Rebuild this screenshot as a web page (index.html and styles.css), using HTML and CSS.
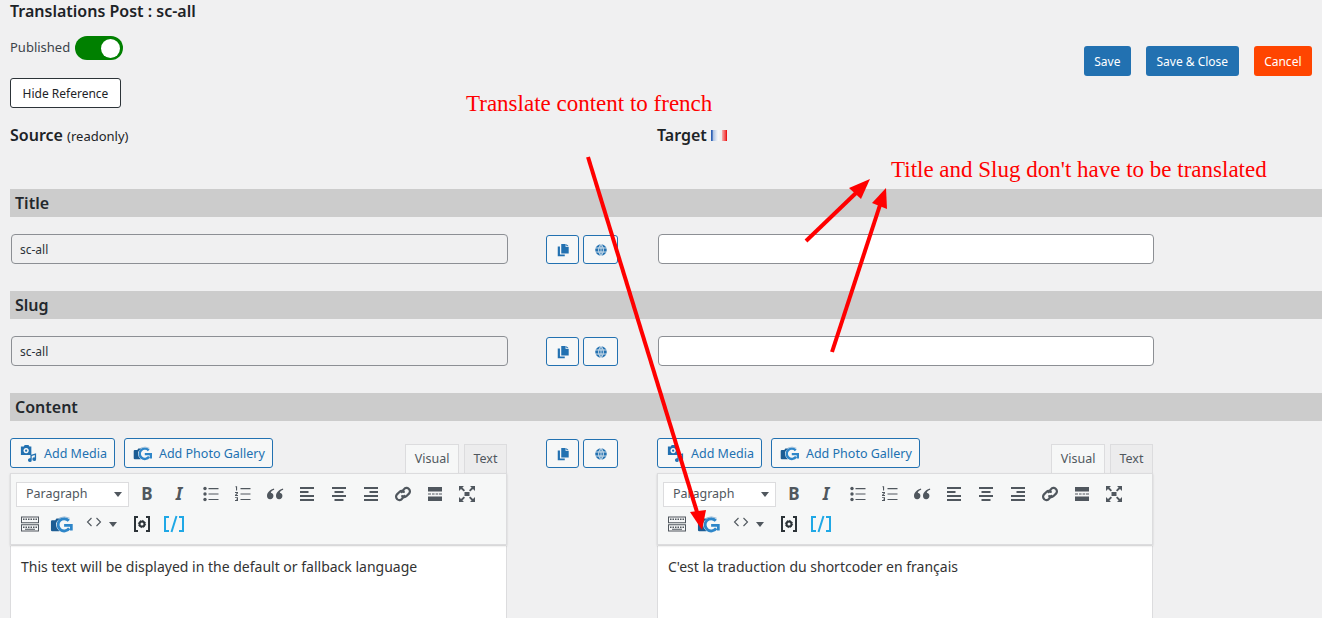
FILE: index.html
```html
<!DOCTYPE html>
<html lang="en">
<head>
<meta charset="utf-8">
<title>Translations Post</title>
<link rel="stylesheet" href="styles.css">
</head>
<body>
<svg class="defs" width="0" height="0" aria-hidden="true">
  <defs>
    <symbol id="i-copy" viewBox="0 0 16 16"><path d="M6 1h5v3.5h3.5V12H6z" /><path d="M11.8 1l2.7 2.8h-2.7z"/><path d="M4.5 4H2v11h8v-1.8H4.5z"/></symbol>
    <symbol id="i-globe" viewBox="0 0 16 16"><circle cx="8" cy="8" r="6.6"/><path d="M1.4 5.7h13.2M1.4 10.3h13.2M8 1.4v13.2M8 1.4C4.4 5 4.4 11 8 14.6M8 1.4c3.6 3.6 3.6 9.6 0 13.2" fill="none" stroke="#f6f7f7" stroke-width=".9"/></symbol>
    <symbol id="i-media" viewBox="0 0 20 20"><path fill-rule="evenodd" d="M2 2.5h3l1-1.5h4l1 1.5h2v9H2zM7.5 4.2a2.8 2.8 0 1 0 .01 0z"/><path d="M12 11.5l6-1.7v6.2a2 2 0 1 1-1.4-1.9v-2.5L13.4 12.6v4.4a2 2 0 1 1-1.4-1.9z"/><circle cx="7.5" cy="7" r="1.2"/></symbol>
    <symbol id="i-gallery" viewBox="0 0 28 20">
      <path fill="#1c5c93" d="M1 6.5Q1 5 2.5 5H6l1.5-2h4.5Q6.5 6 7 11q.3 4 4 7H2.5Q1 18 1 16.5z"/>
      <path fill="none" stroke="#2e86c9" stroke-width="3.4" d="M22 5.6A7.2 7.2 0 1 0 22.5 14.5"/>
      <path fill="none" stroke="#2e86c9" stroke-width="3.2" d="M16.5 11H25v6"/>
      <path fill="none" stroke="#8fb4d3" stroke-width="1" d="M11 2.2Q17 -.4 23 2.6"/>
    </symbol>
    <symbol id="i-ul" viewBox="0 0 20 20"><circle cx="4" cy="4.5" r="1.7"/><circle cx="4" cy="10" r="1.7"/><circle cx="4" cy="15.5" r="1.7"/><path d="M7.5 4h10v1.2h-10zM7.5 9.4h10v1.2h-10zM7.5 14.9h10v1.2h-10z"/></symbol>
    <symbol id="i-ol" viewBox="0 0 20 20"><path d="M7.5 4h10v1.2h-10zM7.5 9.4h10v1.2h-10zM7.5 14.9h10v1.2h-10z"/><path d="M2.5 2.2h1.6v4.4H3V3.2h-.5zM2 8h3v1.3L3.4 11H5v.9H2v-.8l1.9-2.2H2zM2 13.2h3v3.8H2v-.9h2v-.6H3v-.8h1v-.6H2z"/></symbol>
    <symbol id="i-quote" viewBox="0 0 20 20"><path d="M9 4.5C5.5 5.5 2 8 2 12a3.2 3.2 0 1 0 3.8-3.2C6 7.4 7.4 6.4 9.2 5.7zM18 4.5C14.5 5.5 11 8 11 12a3.2 3.2 0 1 0 3.8-3.2c.2-1.4 1.6-2.4 3.4-3.1z"/></symbol>
    <symbol id="i-al" viewBox="0 0 20 20"><path d="M3 3h14v2H3zM3 7h8.5v2H3zM3 11h14v2H3zM3 15h14v2H3z"/></symbol>
    <symbol id="i-ac" viewBox="0 0 20 20"><path d="M3 3h14v2H3zM5.5 7h9v2h-9zM3 11h14v2H3zM5.5 15h9v2h-9z"/></symbol>
    <symbol id="i-ar" viewBox="0 0 20 20"><path d="M3 3h14v2H3zM8.5 7H17v2H8.5zM3 11h14v2H3zM3 15h14v2H3z"/></symbol>
    <symbol id="i-link" viewBox="0 0 20 20"><g fill="none" stroke-width="2.2" stroke-linecap="round"><path d="M8.5 8.2 11 5.2a3.2 3.2 0 0 1 4.7-.4l.1.1a3.2 3.2 0 0 1 .2 4.7l-2.4 2.4a3.2 3.2 0 0 1-4.4.1"/><path d="M11.5 11.8 9 14.8a3.2 3.2 0 0 1-4.7.4l-.1-.1A3.2 3.2 0 0 1 4 10.4l2.4-2.4a3.2 3.2 0 0 1 4.4-.1"/></g></symbol>
    <symbol id="i-more" viewBox="0 0 20 20"><path d="M3 3h14v4.5H3zM3 12.5h14V17H3zM3 9.4h3v1.2H3zM7 9.4h2.6v1.2H7zM10.6 9.4h2.6v1.2h-2.6zM14 9.4h3v1.2h-3z"/></symbol>
    <symbol id="i-full" viewBox="0 0 20 20"><path d="M2 2h5L5.4 3.6 8 6.2 6.8 7.6 4 5 2 7zM18 2v5l-2-2-2.8 2.6L12 6.2l2.6-2.6L13 2zM2 18v-5l2 2 2.8-2.6L8 13.8l-2.6 2.6L7 18zM18 18h-5l1.6-1.6-2.6-2.6 1.2-1.4L16 15l2-2z"/><path d="M7.5 8h5v4h-5z"/></symbol>
    <symbol id="i-kbd" viewBox="0 0 20 16"><path fill-rule="evenodd" d="M1 .5h18v6.7H1zM2 1.5v4.7h16V1.500z"/><path fill-rule="evenodd" d="M1 8.300h18V15.500H1zM2 9.300v5.200h16V9.300z"/><path d="M3 2.500h1.500V4H3zM5.500 2.500H7V4H5.500zM8 2.500h1.500V4H8zM10.500 2.500H12V4h-1.500zM13 2.500h1.500V4H13zM15.500 2.500H17V4h-1.500zM3 10.500h1.500V12H3zM5.500 10.500H7V12H5.500zM8 10.500h1.500V12H8zM10.500 10.500H12V12h-1.500zM13 10.500h1.500V12H13zM15.500 10.500H17V12h-1.500zM5 12.800h10v1H5z"/></symbol>
    <symbol id="i-code" viewBox="0 0 16 10"><path fill="none" stroke-width="1.100" d="M5.500 1 1.500 5l4 4M10.500 1l4 4-4 4"/></symbol>
    <symbol id="i-sc" viewBox="0 0 18 18"><path fill="none" stroke="#2c3338" stroke-width="2" d="M5 2H2v14h3M13 2h3v14h-3"/><circle cx="9" cy="9" r="2.500" fill="none" stroke="#2c3338" stroke-width="2"/><circle cx="9" cy="9" r="3.600" fill="none" stroke="#2c3338" stroke-width="1" stroke-dasharray="1.300 1.500"/></symbol>
    <symbol id="i-slash" viewBox="0 0 22 18"><path fill="none" stroke="#1fa8e6" stroke-width="2" d="M6 2H2v14h4M16 2h4v14h-4M13.500 1 8.500 17"/></symbol>
  </defs>
</svg>

<main class="page">
  <header class="top">
    <div class="top-main">
      <h1 class="page-title">Translations Post : sc-all</h1>
      <div class="status">
        <span class="status-label">Published</span>
        <span class="toggle"><span class="toggle-knob"></span></span>
      </div>
      <button class="btn-outline">Hide Reference</button>
    </div>
    <div class="actions">
      <button class="btn-solid">Save</button>
      <button class="btn-solid">Save &amp; Close</button>
      <button class="btn-solid btn-cancel">Cancel</button>
    </div>
  </header>

  <div class="columns heads">
    <h2 class="col-head">Source <small class="col-note">(readonly)</small></h2>
    <span></span>
    <h2 class="col-head">Target <span class="flag"></span></h2>
  </div>

  <section class="field">
    <h3 class="bar">Title</h3>
    <div class="columns row">
      <input class="text-input readonly" value="sc-all" readonly>
      <div class="tools">
        <button class="tool"><svg class="ti"><use href="#i-copy"/></svg></button>
        <button class="tool tool-w"><svg class="ti"><use href="#i-globe"/></svg></button>
      </div>
      <input class="text-input target">
    </div>
  </section>

  <section class="field">
    <h3 class="bar">Slug</h3>
    <div class="columns row">
      <input class="text-input readonly" value="sc-all" readonly>
      <div class="tools">
        <button class="tool"><svg class="ti"><use href="#i-copy"/></svg></button>
        <button class="tool tool-w"><svg class="ti"><use href="#i-globe"/></svg></button>
      </div>
      <input class="text-input target">
    </div>
  </section>

  <section class="field">
    <h3 class="bar">Content</h3>
    <div class="columns row">
      <div class="editor">
        <div class="editor-head">
          <div class="media-btns">
            <button class="media"><svg class="mi"><use href="#i-media"/></svg>Add Media</button>
            <button class="media"><svg class="gi"><use href="#i-gallery"/></svg>Add Photo Gallery</button>
          </div>
          <div class="tabs"><span class="tab tab-on">Visual</span><span class="tab">Text</span></div>
        </div>
        <div class="toolbar">
          <div class="tb-row tb-first">
            <span class="select">Paragraph<i class="caret"></i></span>
            <span class="tb tb-b">B</span>
            <span class="tb tb-i">I</span>
            <span class="tb"><svg class="ic"><use href="#i-ul"/></svg></span>
            <span class="tb"><svg class="ic"><use href="#i-ol"/></svg></span>
            <span class="tb"><svg class="ic"><use href="#i-quote"/></svg></span>
            <span class="tb"><svg class="ic"><use href="#i-al"/></svg></span>
            <span class="tb"><svg class="ic"><use href="#i-ac"/></svg></span>
            <span class="tb"><svg class="ic"><use href="#i-ar"/></svg></span>
            <span class="tb"><svg class="ic"><use href="#i-link"/></svg></span>
            <span class="tb"><svg class="ic"><use href="#i-more"/></svg></span>
            <span class="tb"><svg class="ic"><use href="#i-full"/></svg></span>
          </div>
          <div class="tb-row tb-second">
            <span class="tb"><svg class="ic-kbd"><use href="#i-kbd"/></svg></span>
            <span class="tb"><svg class="gi-tb"><use href="#i-gallery"/></svg></span>
            <span class="tb tb-code"><svg class="ic-code"><use href="#i-code"/></svg><i class="caret"></i></span>
            <span class="tb"><svg class="ic-sc"><use href="#i-sc"/></svg></span>
            <span class="tb"><svg class="ic-slash"><use href="#i-slash"/></svg></span>
          </div>
        </div>
        <div class="editor-body">This text will be displayed in the default or fallback language</div>
      </div>
      <div class="tools tools-content">
        <button class="tool"><svg class="ti"><use href="#i-copy"/></svg></button>
        <button class="tool tool-w"><svg class="ti"><use href="#i-globe"/></svg></button>
      </div>
      <div class="editor editor-target">
        <div class="editor-head">
          <div class="media-btns">
            <button class="media"><svg class="mi"><use href="#i-media"/></svg>Add Media</button>
            <button class="media"><svg class="gi"><use href="#i-gallery"/></svg>Add Photo Gallery</button>
          </div>
          <div class="tabs"><span class="tab tab-on">Visual</span><span class="tab">Text</span></div>
        </div>
        <div class="toolbar">
          <div class="tb-row tb-first">
            <span class="select">Paragraph<i class="caret"></i></span>
            <span class="tb tb-b">B</span>
            <span class="tb tb-i">I</span>
            <span class="tb"><svg class="ic"><use href="#i-ul"/></svg></span>
            <span class="tb"><svg class="ic"><use href="#i-ol"/></svg></span>
            <span class="tb"><svg class="ic"><use href="#i-quote"/></svg></span>
            <span class="tb"><svg class="ic"><use href="#i-al"/></svg></span>
            <span class="tb"><svg class="ic"><use href="#i-ac"/></svg></span>
            <span class="tb"><svg class="ic"><use href="#i-ar"/></svg></span>
            <span class="tb"><svg class="ic"><use href="#i-link"/></svg></span>
            <span class="tb"><svg class="ic"><use href="#i-more"/></svg></span>
            <span class="tb"><svg class="ic"><use href="#i-full"/></svg></span>
          </div>
          <div class="tb-row tb-second">
            <span class="tb"><svg class="ic-kbd"><use href="#i-kbd"/></svg></span>
            <span class="tb"><svg class="gi-tb"><use href="#i-gallery"/></svg></span>
            <span class="tb tb-code"><svg class="ic-code"><use href="#i-code"/></svg><i class="caret"></i></span>
            <span class="tb"><svg class="ic-sc"><use href="#i-sc"/></svg></span>
            <span class="tb"><svg class="ic-slash"><use href="#i-slash"/></svg></span>
          </div>
        </div>
        <div class="editor-body">C'est la traduction du shortcoder en français</div>
      </div>
    </div>
  </section>
</main>

<svg class="arrows" viewBox="0 0 1322 618" aria-hidden="true">
  <path class="shaft" d="M588 157 697 512"/>
  <path class="head" d="M702 530 690 512 706 510z"/>
  <path class="shaft" d="M806 241 856 193"/>
  <path class="head" d="M870 179 849 188 861 199z"/>
  <path class="shaft" d="M832 352 880 205"/>
  <path class="head" d="M886 188 872 203 887 209z"/>
</svg>
<p class="note note-a">Translate content to french</p>
<p class="note note-b">Title and Slug don't have to be translated</p>
</body>
</html>
```

FILE: styles.css
```css
* { box-sizing: border-box; }
html, body { margin: 0; height: 618px; overflow: hidden; }
body {
  position: relative;
  background: #f0f0f1;
  color: #2c3338;
  font: 13px/1.4 "Noto Sans", sans-serif;
}
.defs { position: absolute; }
.page { padding-left: 10px; }

.top { display: flex; justify-content: space-between; height: 122px; }
.page-title { margin: 0; padding-top: 0; font-size: 16px; line-height: 23px; font-weight: 600; color: #1d2327; }
.status { display: flex; align-items: center; gap: 5px; margin-top: 13px; height: 24px; }
.status-label { font-size: 13px; color: #3c434a; position: relative; top: -1px; }
.toggle { display: flex; justify-content: flex-end; align-items: center; width: 48px; height: 24px; padding-right: 3px; background: #008000; border-radius: 12px; }
.toggle-knob { width: 19px; height: 19px; border-radius: 50%; background: #fff; }
.btn-outline {
  display: block; margin-top: 18px; width: 111px; height: 30px; padding: 0;
  font: 12px "Noto Sans", sans-serif; color: #1d2327; background: #fff;
  border: 1px solid #2c3338; border-radius: 3px;
}
.actions { display: flex; gap: 15px; margin: 46px 10px 0 0; height: 30px; }
.btn-solid {
  height: 30px; padding: 0 10.500px; font: 12px "Noto Sans", sans-serif; color: #fff;
  background: #2271b1; border: 0; border-radius: 3px;
}
.btn-cancel { background: #ff4500; }

.columns { display: grid; grid-template-columns: 536px 111px 1fr; }
.heads { height: 67px; }
.col-head { margin: 0; font-size: 16px; line-height: 27px; font-weight: 600; color: #1d2327; }
.col-note { font-size: 13px; font-weight: 400; }
.flag {
  display: inline-block; width: 16px; height: 11px; vertical-align: 0;
  background: linear-gradient(90deg, #2f62b5 0 8%, #a9c0e2 12%, #dfe7f2 33%, #f7f7f7 45%, #ececec 66%, #f6a0a0 72%, #f24a4a 90%, #e60000 100%);
}

.field { height: 102px; }
.bar { margin: 0 0 17px; height: 28px; padding-left: 5px; background: #ccc; font-size: 16px; line-height: 28px; font-weight: 600; color: #23282d; }
.text-input {
  display: block; margin-left: 1px; width: 497px; height: 30px; padding: 0 8px;
  font: 12px "Noto Sans", sans-serif; color: #2c3338;
  background: #fff; border: 1px solid #8c8f94; border-radius: 4px;
}
.readonly { background: #f0f0f1; }
.target { width: 496px; }

.tools { display: flex; gap: 4px; padding-top: 1px; }
.tools-content { padding-top: 1px; }
.tool {
  display: flex; align-items: center; justify-content: center;
  width: 33px; height: 29px; padding: 0; background: #f6f7f7;
  border: 1px solid #2271b1; border-radius: 3px;
}
.tool-w { width: 35px; }
.ti { width: 14px; height: 14px; fill: #2271b1; }

.editor { width: 497px; }
.editor-target { width: 496px; }
.editor-head { display: flex; justify-content: space-between; height: 35px; }
.media-btns { display: flex; gap: 9px; }
.media {
  display: flex; align-items: center; gap: 6px; height: 30px; padding: 0 7px 0 8px;
  font: 12.500px "Noto Sans", sans-serif; color: #2271b1;
  background: #f6f7f7; border: 1px solid #2271b1; border-radius: 3px;
}
.mi { width: 19px; height: 19px; fill: #2271b1; }
.gi { width: 20px; height: 15px; }
.tabs { display: flex; gap: 5px; align-items: flex-end; }
.tab {
  height: 29px; padding: 0 8.500px; font-size: 12.500px; line-height: 27px; color: #50575e;
  background: #ececed; border: 1px solid #dcdcde; border-bottom: 0;
}
.tab-on { height: 30px; margin-bottom: -1px; position: relative; background: #f6f7f7; }

.toolbar {
  height: 72px; background: #f6f7f7; border: 1px solid #dcdcde; margin-left: 0;
  box-shadow: 0 1px 2px rgba(0,0,0,.15); position: relative;
}
.tb-row { display: flex; align-items: center; height: 30px; }
.tb-first { padding-left: 5px; margin-top: 5px; gap: 0; }
.tb-second { padding-left: 3px; }
.select {
  display: flex; align-items: center; justify-content: space-between;
  width: 113px; height: 25px; margin-right: 2px; padding: 0 6px 0 9px;
  font-size: 12.500px; color: #50575e; background: #fff; border: 1px solid #dcdcde;
}
.caret { width: 0; height: 0; border: 4px solid transparent; border-top: 5px solid #50575e; border-bottom: 0; }
.tb {
  display: flex; align-items: center; justify-content: center;
  width: 32px; height: 30px; color: #50575e;
}
.tb-b { font-size: 17px; font-weight: 700; }
.tb-i { font-size: 17px; font-weight: 700; font-style: italic; }
.tb-code { width: 48px; gap: 7px; padding-left: 2px; justify-content: flex-start; padding-left: 8px; }
.ic { width: 20px; height: 20px; fill: #50575e; stroke: #50575e; stroke-width: 0; }
.ic-kbd { width: 20px; height: 16px; fill: #50575e; }
.gi-tb { width: 24px; height: 17px; }
.ic-code { width: 16px; height: 10px; stroke: #50575e; position: relative; top: -2px; }
.ic-sc { width: 18px; height: 18px; }
.ic-slash { width: 22px; height: 18px; }
.editor-body {
  height: 120px; padding: 10px 10px; font-size: 14px; line-height: 22px; color: #333;
  background: #fff; border: 1px solid #dcdcde; border-top: 0; margin-top: 1px;
}

.arrows { position: absolute; left: 0; top: 0; width: 1322px; height: 618px; pointer-events: none; }
.shaft { fill: none; stroke: #f00; stroke-width: 4; }
.head { fill: #f00; }
.note {
  position: absolute; margin: 0; color: #f00; font-family: "Liberation Serif", serif;
  font-size: 23px; line-height: 26px; white-space: nowrap;
}
.note-a { left: 466px; top: 91px; }
.note-b { left: 891px; top: 157px; }
```
